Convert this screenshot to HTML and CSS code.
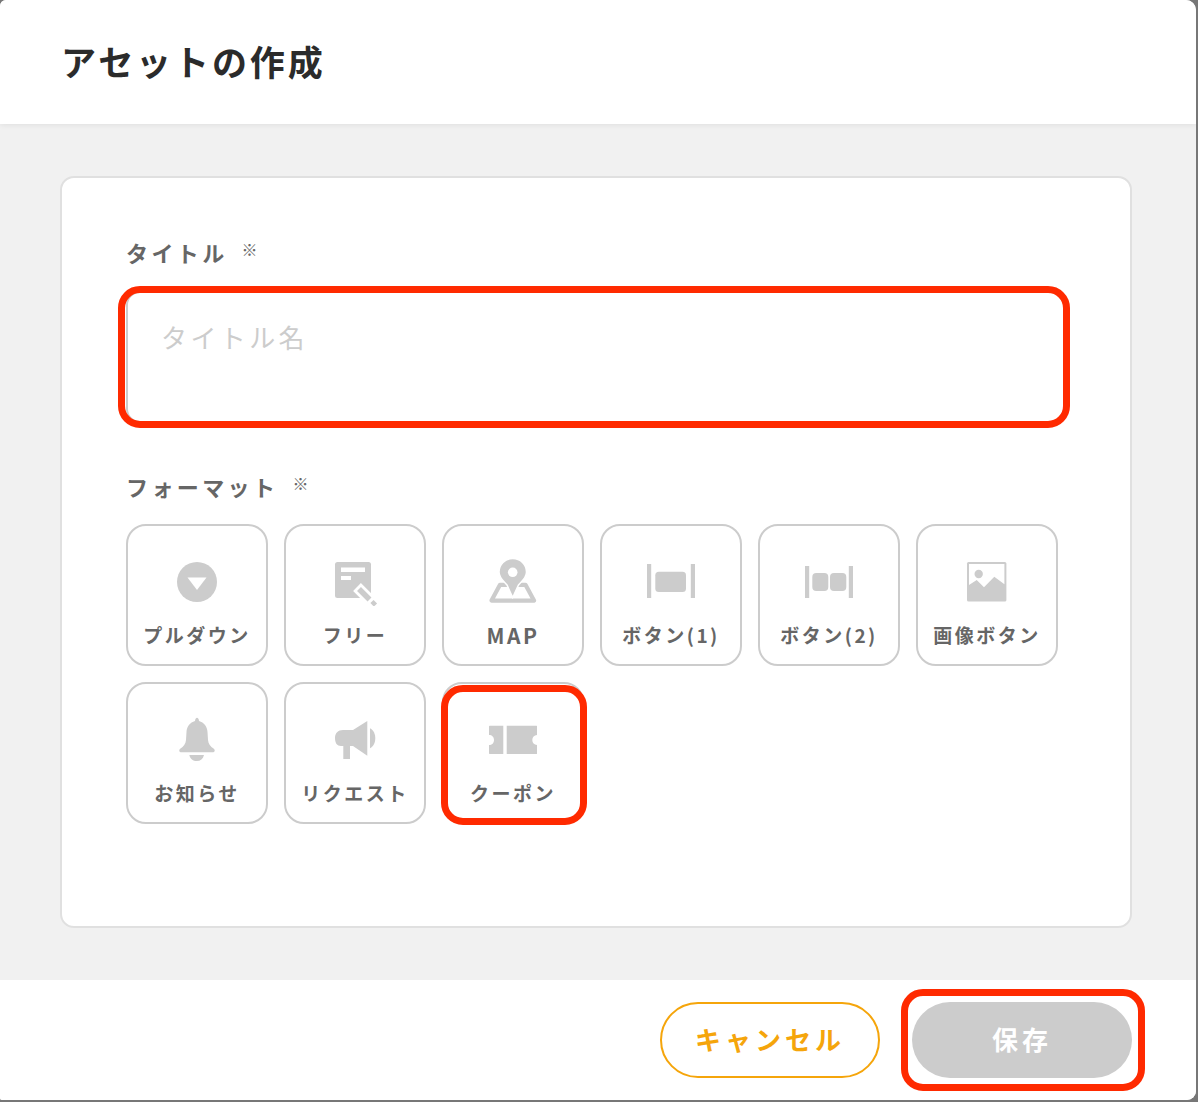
FILE: index.html
```html
<!DOCTYPE html>
<html lang="ja">
<head>
<meta charset="utf-8">
<title>アセットの作成</title>
<link rel="stylesheet" href="styles.css">
</head>
<body>
<div class="modal">
  <header class="modal-header"><h1 class="modal-title">アセットの作成</h1></header>
  <main class="modal-main">
    <section class="card">
      <div class="field-label title-label">タイトル<span class="req">※</span></div>
      <div class="input-wrap">
        <div class="input">タイトル名</div>
        <span class="mark mark-input"></span>
      </div>
      <div class="field-label format-label">フォーマット<span class="req">※</span></div>
      <div class="tiles">
        <div class="tile">
          <svg class="icon" viewBox="0 0 48 48"><circle cx="24" cy="24" r="20" fill="#ccc"/><path d="M14.5 19.5H33.5L24 32Z" fill="#fff"/></svg>
          <span class="tile-label">プルダウン</span>
        </div>
        <div class="tile">
          <svg class="icon" viewBox="0 0 48 48"><rect x="4" y="4" width="36" height="36" rx="2.5" fill="#ccc"/><rect x="10" y="9.5" width="24" height="4.5" fill="#fff"/><rect x="10" y="18" width="10" height="4" fill="#fff"/><path d="M26 29L39 42" stroke="#fff" stroke-width="11" fill="none"/><path d="M28 31L38.5 41.5" stroke="#ccc" stroke-width="5.5" fill="none"/><path d="M41 43.5L44.5 47" stroke="#ccc" stroke-width="4.5" fill="none"/></svg>
          <span class="tile-label">フリー</span>
        </div>
        <div class="tile">
          <svg class="icon" viewBox="0 0 48 48"><path d="M11 26.8H36.5L45 42.6H2.5Z" fill="none" stroke="#ccc" stroke-width="4.2" stroke-linejoin="round"/><path d="M23.7 0.5C31.5 0.5 37.5 6.5 37.5 14C37.5 20 33 23 29.5 27L23.7 39.5L18 27C14.5 23 10 20 10 14C10 6.5 16 0.5 23.7 0.5Z" fill="#ccc" stroke="#fff" stroke-width="1.5"/><circle cx="23.7" cy="14.3" r="4.8" fill="#fff"/></svg>
          <span class="tile-label tile-label-latin">MAP</span>
        </div>
        <div class="tile">
          <svg class="icon" viewBox="0 0 48 48"><rect x="0" y="6" width="4.2" height="34" fill="#ccc"/><rect x="43.8" y="6" width="4.2" height="34" fill="#ccc"/><rect x="8.3" y="13.7" width="30.7" height="20.3" rx="3.5" fill="#ccc"/></svg>
          <span class="tile-label">ボタン(1)</span>
        </div>
        <div class="tile">
          <svg class="icon" viewBox="0 0 48 48"><rect x="0" y="8" width="4.2" height="32" fill="#ccc"/><rect x="43.8" y="8" width="4.2" height="32" fill="#ccc"/><rect x="7.3" y="15" width="16" height="18" rx="4" fill="#ccc"/><rect x="25" y="15" width="16.3" height="18" rx="4" fill="#ccc"/></svg>
          <span class="tile-label">ボタン(2)</span>
        </div>
        <div class="tile">
          <svg class="icon" viewBox="0 0 48 48"><rect x="4" y="4" width="39.4" height="39.4" rx="1.5" fill="#ccc"/><path d="M6 6H41.4V26.3L31.3 18.7L21 29.3L13.7 22L6 27Z" fill="#fff"/><circle cx="15.7" cy="16" r="4.2" fill="#ccc"/></svg>
          <span class="tile-label">画像ボタン</span>
        </div>
        <div class="tile">
          <svg class="icon" viewBox="0 0 48 48"><path d="M22 5C22 3 23 1.7 24 1.7C25 1.7 26 3 26 5C31 6.5 34.3 10.5 34.5 16L35 24C35.3 28 37.5 30.5 40.5 32.5C42.5 34 42 36.3 39.5 36.3H8.5C6 36.3 5.5 34 7.5 32.5C10.5 30.5 12.7 28 13 24L13.5 16C13.7 10.5 17 6.5 22 5Z" fill="#ccc"/><path d="M16.3 39H31C30 43 27.5 45 23.7 45C20 45 17.3 43 16.3 39Z" fill="#ccc"/></svg>
          <span class="tile-label">お知らせ</span>
        </div>
        <div class="tile">
          <svg class="icon" viewBox="0 0 48 48"><path d="M12 14H22L36.3 5V39.7L22 30H19V43H12.3V30H10C6 30 4 27 4 22C4 17 7 14 12 14Z" fill="#ccc"/><path d="M39 12.3C42.5 14 44.3 18 44.3 22.3C44.3 26.6 42.5 30.6 39 32.3Z" fill="#ccc"/></svg>
          <span class="tile-label">リクエスト</span>
        </div>
        <div class="tile tile-marked">
          <svg class="icon" viewBox="0 0 48 48"><path d="M1 9.7H14.3V38H1C0.4 38 0 37.6 0 37V29C3 29 5 27 5 24C5 21 3 19 0 19V10.7C0 10.1 0.4 9.7 1 9.7Z" fill="#ccc"/><path d="M17.7 9.7H47.3C47.9 9.7 48.3 10.1 48.3 10.7V19C45.3 19 43.3 21 43.3 24C43.3 27 45.3 29 48.3 29V37C48.3 37.6 47.9 38 47.3 38H17.7Z" fill="#ccc"/></svg>
          <span class="tile-label">クーポン</span>
          <span class="mark mark-tile"></span>
        </div>
      </div>
    </section>
  </main>
  <footer class="modal-footer">
    <button class="btn btn-cancel" type="button">キャンセル</button>
    <div class="save-wrap">
      <button class="btn btn-save" type="button">保存</button>
      <span class="mark mark-save"></span>
    </div>
  </footer>
</div>
</body>
</html>
```
FILE: styles.css
```css
* { box-sizing: border-box; }
html, body { margin: 0; padding: 0; }
body {
  width: 1198px;
  height: 1102px;
  overflow: hidden;
  background: #777;
  font-family: "Noto Sans CJK JP", "Noto Sans", sans-serif;
}
.modal {
  width: 1196px;
  height: 1100px;
  display: flex;
  flex-direction: column;
  background: #f1f1f1;
  border-radius: 6px 10px 9px 2px;
  overflow: hidden;
}
.modal-header {
  height: 124px;
  flex: none;
  display: flex;
  align-items: center;
  padding: 0 0 4px 61px;
  background: #fff;
  box-shadow: 0 1px 6px rgba(0, 0, 0, 0.08);
  position: relative;
}
.modal-title {
  margin: 0;
  font-size: 35px;
  font-weight: 700;
  letter-spacing: 2.9px;
  color: #2b2b2b;
  line-height: 1;
}
.modal-main {
  flex: 1;
  padding: 52px 64px 52px 60px;
}
.card {
  height: 752px;
  background: #fff;
  border: 2px solid #e0e0e0;
  border-radius: 14px;
  padding: 0 64px;
}
.field-label {
  font-size: 22px;
  font-weight: 700;
  letter-spacing: 3.4px;
  color: #666;
  line-height: 30px;
  display: flex;
}
.title-label { margin-top: 59px; }
.format-label { margin-top: 48px; }
.req {
  font-size: 16px;
  font-weight: 400;
  letter-spacing: 0;
  line-height: 16px;
  margin: 4px 0 0 14px;
}
.input-wrap {
  position: relative;
  margin-top: 24px;
}
.input {
  height: 132px;
  width: 940px;
  border: 2px solid #ccc;
  border-radius: 14px;
  padding: 25px 33px;
  font-size: 26px;
  line-height: 38px;
  letter-spacing: 3.4px;
  color: #ccc;
}
.mark {
  position: absolute;
  border: 7px solid #ff2a00;
  border-radius: 22px;
  pointer-events: none;
}
.mark-input { left: -8px; top: -5px; width: 952px; height: 142px; }
.tiles {
  margin-top: 23px;
  display: grid;
  grid-template-columns: repeat(6, 142px);
  grid-auto-rows: 142px;
  gap: 16px;
}
.tile {
  position: relative;
  border: 2px solid #ccc;
  border-radius: 20px;
  display: flex;
  flex-direction: column;
  align-items: center;
  padding-top: 32px;
}
.icon {
  width: 48px;
  height: 48px;
  display: block;
  flex: none;
}
.tile-label {
  margin-top: 15px;
  font-size: 19px;
  font-weight: 700;
  line-height: 28px;
  letter-spacing: 2.5px;
  color: #666;
  white-space: nowrap;
}
.tile-label-latin { font-size: 21px; letter-spacing: 2.6px; }
.mark-tile { left: -3px; top: 1px; width: 146px; height: 140px; }
.modal-footer {
  height: 120px;
  flex: none;
  display: flex;
  justify-content: flex-end;
  align-items: flex-start;
  gap: 32px;
  padding: 22px 64px 0 0;
  background: #fff;
}
.btn {
  width: 220px;
  height: 76px;
  border-radius: 38px;
  font-family: inherit;
  font-size: 26px;
  font-weight: 700;
  letter-spacing: 4px;
  padding: 0 0 4px;
}
.btn-cancel {
  background: #fff;
  border: 2px solid #f5a50b;
  color: #f5a50b;
}
.btn-save {
  display: block;
  background: #ccc;
  border: 0;
  color: #fff;
}
.save-wrap { position: relative; }
.mark-save { left: -11px; top: -13px; width: 244px; height: 102px; }
```
